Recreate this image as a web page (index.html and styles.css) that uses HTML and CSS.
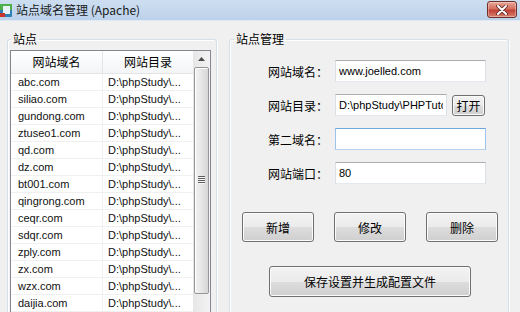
FILE: index.html
```html
<!DOCTYPE html>
<html lang="zh-CN">
<head>
    <meta charset="UTF-8">
    <title>站点域名管理 (Apache)</title>
    <link rel="stylesheet" href="styles.css">
</head>
<body>
    <div class="window">
        <div class="titlebar">
            <svg class="app-icon" width="12" height="13" viewBox="0 0 12 13">
                <rect x="0" y="0" width="12" height="13" rx="1" fill="#2f7fb8"/>
                <rect x="0" y="0" width="12" height="6" fill="#4fb04a"/>
                <rect x="3" y="2" width="7" height="8" fill="#e8f2fa"/>
                <rect x="0" y="9" width="5" height="4" fill="#c8352c"/>
            </svg>
            <span class="title">站点域名管理 (Apache)</span>
            <button class="close-btn">
                <svg width="14" height="10" viewBox="0 0 14 10">
                    <path d="M3 1 L11 9 M11 1 L3 9" stroke="#5a2a24" stroke-width="3.6" stroke-linecap="round"/>
                    <path d="M3 1 L11 9 M11 1 L3 9" stroke="#fff" stroke-width="2" stroke-linecap="round"/>
                </svg>
            </button>
        </div>

        <div class="content">
            <fieldset class="group group-sites">
                <legend>站点</legend>
                <div class="listview">
                    <div class="list-main">
                        <div class="list-header">
                            <span class="col-name">网站域名</span>
                            <span class="col-dir">网站目录</span>
                        </div>
                        <div class="list-row"><span class="col-name">abc.com</span><span class="col-dir">D:\phpStudy\...</span></div>
                        <div class="list-row"><span class="col-name">siliao.com</span><span class="col-dir">D:\phpStudy\...</span></div>
                        <div class="list-row"><span class="col-name">gundong.com</span><span class="col-dir">D:\phpStudy\...</span></div>
                        <div class="list-row"><span class="col-name">ztuseo1.com</span><span class="col-dir">D:\phpStudy\...</span></div>
                        <div class="list-row"><span class="col-name">qd.com</span><span class="col-dir">D:\phpStudy\...</span></div>
                        <div class="list-row"><span class="col-name">dz.com</span><span class="col-dir">D:\phpStudy\...</span></div>
                        <div class="list-row"><span class="col-name">bt001.com</span><span class="col-dir">D:\phpStudy\...</span></div>
                        <div class="list-row"><span class="col-name">qingrong.com</span><span class="col-dir">D:\phpStudy\...</span></div>
                        <div class="list-row"><span class="col-name">ceqr.com</span><span class="col-dir">D:\phpStudy\...</span></div>
                        <div class="list-row"><span class="col-name">sdqr.com</span><span class="col-dir">D:\phpStudy\...</span></div>
                        <div class="list-row"><span class="col-name">zply.com</span><span class="col-dir">D:\phpStudy\...</span></div>
                        <div class="list-row"><span class="col-name">zx.com</span><span class="col-dir">D:\phpStudy\...</span></div>
                        <div class="list-row"><span class="col-name">wzx.com</span><span class="col-dir">D:\phpStudy\...</span></div>
                        <div class="list-row"><span class="col-name">daijia.com</span><span class="col-dir">D:\phpStudy\...</span></div>
                    </div>
                    <div class="scrollbar">
                        <div class="scroll-up">
                            <svg width="7" height="4" viewBox="0 0 7 4"><path d="M0 4 L3.5 0 L7 4 Z" fill="#4a4a4a"/></svg>
                        </div>
                        <div class="scroll-thumb"><span class="grip"></span></div>
                    </div>
                </div>
            </fieldset>

            <fieldset class="group group-manage">
                <legend>站点管理</legend>
                <div class="form">
                    <div class="form-row">
                        <label>网站域名：</label>
                        <input class="field" type="text" value="www.joelled.com">
                    </div>
                    <div class="form-row">
                        <label>网站目录：</label>
                        <input class="field field-short" type="text" value="D:\phpStudy\PHPTutorial\WWW">
                        <button class="btn btn-open">打开</button>
                    </div>
                    <div class="form-row">
                        <label>第二域名：</label>
                        <input class="field field-focus" type="text" value="">
                    </div>
                    <div class="form-row">
                        <label>网站端口：</label>
                        <input class="field" type="text" value="80">
                    </div>
                </div>
                <div class="btn-row">
                    <button class="btn btn-action">新增</button>
                    <button class="btn btn-action">修改</button>
                    <button class="btn btn-action">删除</button>
                </div>
                <button class="btn btn-save">保存设置并生成配置文件</button>
            </fieldset>
        </div>
    </div>
</body>
</html>
```

FILE: styles.css
```css
* {
    box-sizing: border-box;
}

body {
    margin: 0;
    font-family: "Liberation Sans", "Noto Sans CJK SC", sans-serif;
    font-size: 12px;
    color: #000;
    background-color: #f0f0f0;
}

.window {
    width: 520px;
    height: 312px;
    overflow: hidden;
    background-color: #f0f0f0;
}

/* title bar */
.titlebar {
    height: 21px;
    display: flex;
    align-items: center;
    background: linear-gradient(#cddef1, #bcd2ea);
    border-bottom: 1px solid #dfe9f5;
}

.app-icon {
    margin-top: 1px;
    flex-shrink: 0;
}

.title {
    margin-left: 4px;
    font-family: "Noto Sans CJK SC", sans-serif;
    font-size: 12px;
    line-height: 14px;
    color: #1a1a1a;
}

.close-btn {
    margin-left: auto;
    margin-right: 3px;
    align-self: flex-start;
    margin-top: 1px;
    width: 30px;
    height: 17px;
    padding: 0;
    border: 1px solid #6e2f29;
    border-radius: 3px;
    background: linear-gradient(#e9a898, #d46f5f 45%, #c23f36 55%, #d6816f);
    display: flex;
    align-items: center;
    justify-content: center;
    box-shadow: inset 0 0 0 1px rgba(255, 255, 255, 0.35);
}

/* main area */
.content {
    display: flex;
    gap: 12px;
    padding: 11px 0 0 7px;
}

.group {
    margin: 0;
    padding: 0;
    min-width: 0;
    height: 290px;
    border: 1px solid #d5dfe5;
    border-radius: 3px;
    box-shadow: inset 1px 1px 0 #fff, 1px 1px 0 #fff;
}

.group legend {
    font-family: "Noto Sans CJK SC", sans-serif;
    font-size: 12px;
    line-height: 14px;
    padding: 0 2px;
}

.group-sites {
    width: 210px;
    padding: 4px 0 0 2px;
}

.group-sites legend {
    margin-left: 1px;
}

.group-manage {
    width: 280px;
}

.group-manage legend {
    margin-left: 4px;
}

/* list view */
.listview {
    display: flex;
    width: 201px;
    height: 270px;
    border: 1px solid #828790;
    background-color: #fff;
}

.list-main {
    width: 182px;
}

.list-header {
    display: flex;
    height: 23px;
    background: linear-gradient(#ffffff, #f3f4f6);
    border-bottom: 1px solid #e3e4e6;
}

.list-header span {
    font-family: "Noto Sans CJK SC", sans-serif;
    text-align: center;
    line-height: 21px;
    padding: 0;
}

.list-header .col-name {
    border-right: 1px solid #e3e5e8;
}

.col-name {
    width: 92px;
    padding-left: 7px;
    flex-shrink: 0;
}

.col-dir {
    width: 90px;
    padding-left: 5px;
    flex-shrink: 0;
}

.list-row {
    display: flex;
    height: 17px;
    border-bottom: 1px solid #f0f0f0;
    font-size: 11px;
    line-height: 16px;
    white-space: nowrap;
    color: #111;
}

.list-row .col-name {
    border-right: 1px solid #f0f0f0;
}

/* scroll bar */
.scrollbar {
    width: 17px;
    display: flex;
    flex-direction: column;
    align-items: center;
    background: linear-gradient(90deg, #e6e6e6, #f3f3f3);
}

.scroll-up {
    height: 16px;
    width: 17px;
    display: flex;
    align-items: center;
    justify-content: center;
}

.scroll-thumb {
    width: 15px;
    height: 227px;
    border: 1px solid #979797;
    border-radius: 2px;
    background: linear-gradient(90deg, #f3f3f3, #e6e6e6 50%, #d6d6d6);
    box-shadow: inset 1px 1px 0 #fff;
    display: flex;
    align-items: center;
    justify-content: center;
}

.grip {
    width: 7px;
    height: 8px;
    margin-top: -2px;
    background: repeating-linear-gradient(#5c5c5c 0 1px, #f6f6f6 1px 2px);
}

/* form */
.form {
    display: flex;
    flex-direction: column;
    gap: 12px;
    padding-top: 14px;
}

.form-row {
    display: flex;
    align-items: center;
    height: 22px;
}

.form-row label {
    width: 98px;
    margin-right: 7px;
    text-align: right;
    font-family: "Noto Sans CJK SC", sans-serif;
    font-size: 12px;
}

.field {
    width: 151px;
    height: 22px;
    padding: 0 3px;
    border: 1px solid;
    border-color: #abadb3 #dbdfe6 #e3e9ef #dbdfe6;
    background-color: #fff;
    font-family: "Liberation Sans", sans-serif;
    font-size: 11px;
    color: #000;
    outline: none;
}

.field-short {
    width: 112px;
}

.field-focus {
    border-color: #6fa8dc #9cc4ea #b5d3f0 #9cc4ea;
}

/* buttons */
.btn {
    padding: 0;
    border: 1px solid #707070;
    border-radius: 3px;
    background: linear-gradient(#f2f2f2, #ebebeb 50%, #dddddd 51%, #cfcfcf);
    box-shadow: inset 0 0 0 1px #fbfbfb;
    font-family: "Noto Sans CJK SC", sans-serif;
    font-size: 12px;
    color: #000;
}

.btn-open {
    width: 33px;
    height: 21px;
    margin-left: 5px;
    margin-top: 1px;
}

.btn-row {
    display: flex;
    gap: 20px;
    margin-top: 28px;
    padding-left: 12px;
}

.btn-action {
    width: 72px;
    height: 30px;
}

.btn-save {
    display: block;
    width: 202px;
    height: 31px;
    margin: 24px 0 0 39px;
}
```
